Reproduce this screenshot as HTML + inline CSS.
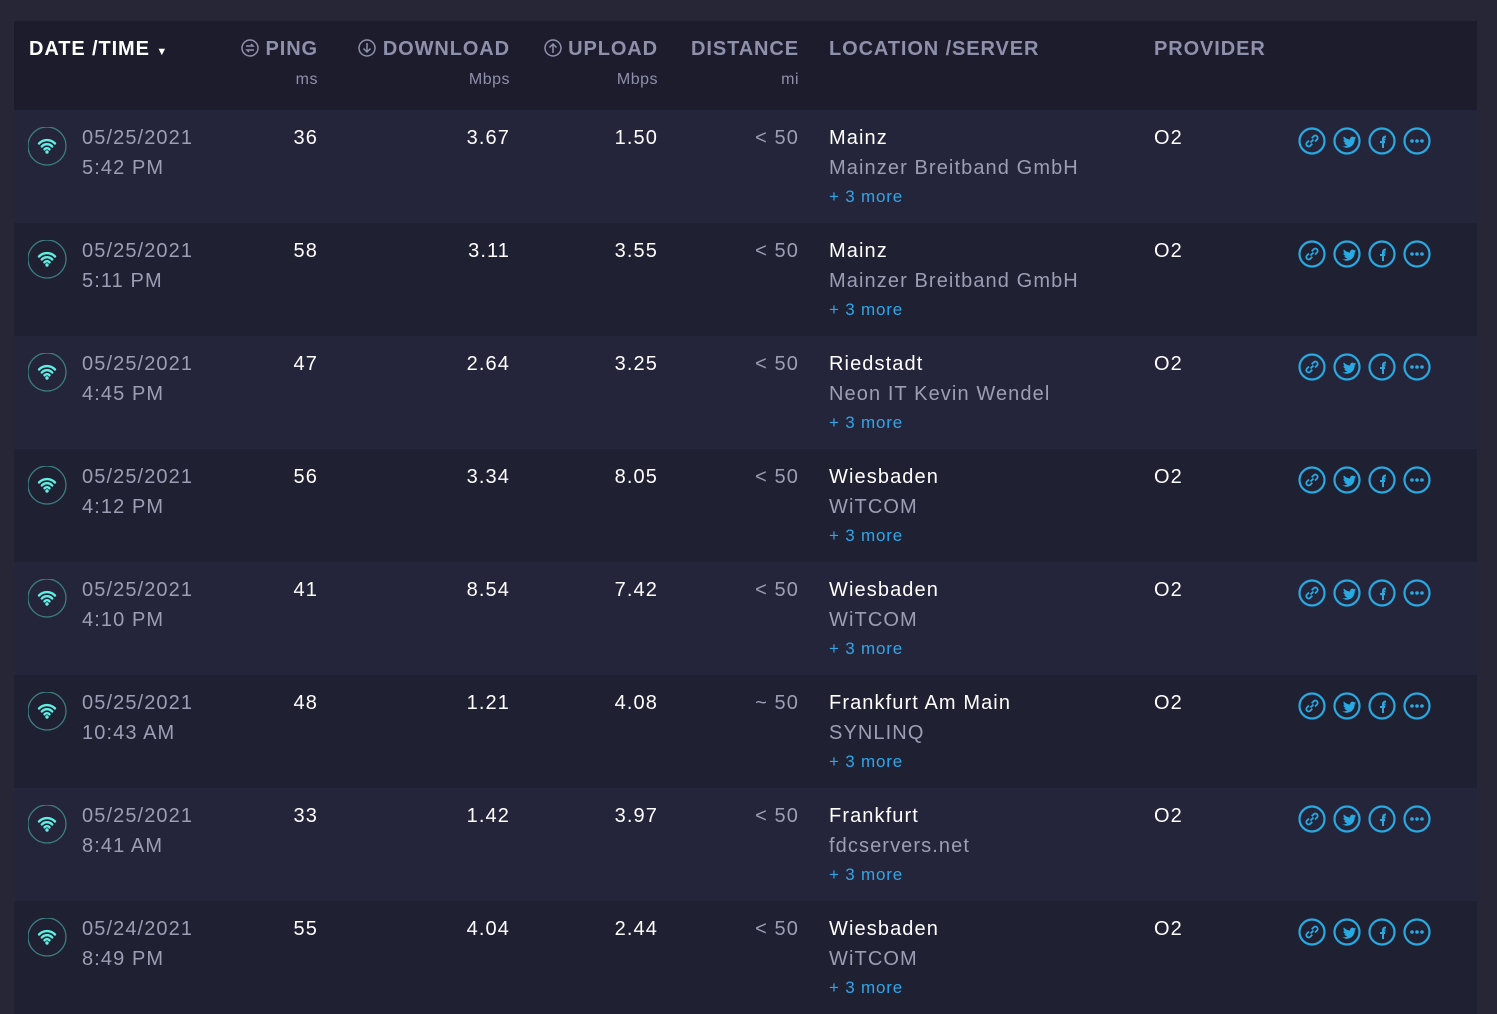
<!DOCTYPE html>
<html><head><meta charset="utf-8"><style>
*{margin:0;padding:0;box-sizing:border-box}
body{width:1497px;height:1011px;background:#262637;font-family:"Liberation Sans",sans-serif;position:relative;overflow:hidden}
.hdr{position:absolute;left:14px;top:21px;width:1463px;height:89px;background:#1c1c2d}
.h{position:absolute;top:17px;font-weight:bold;font-size:20px;color:#8f90ab;letter-spacing:.9px;white-space:nowrap}
.u{position:absolute;top:50px;font-size:16px;color:#8f90ab;white-space:nowrap;letter-spacing:.5px}
.row{position:absolute;left:14px;width:1463px;height:113px}
.a{background:#24253a}.b{background:#1f2031}
.t{position:absolute;font-size:20px;white-space:nowrap;letter-spacing:1.1px}
.w{color:#fff}.g{color:#9d9db4}
.r{text-align:right}
.more{position:absolute;left:815px;top:77px;font-size:17px;color:#2ea6ea;letter-spacing:.8px}
.wifi{position:absolute;left:14px;top:17px}
.ic{position:absolute;top:17px;left:1284px}
</style></head><body>
<div class="hdr">
<div class="h" style="left:15px;color:#fff">DATE /TIME <span style="font-size:11px">▼</span></div>
<div class="h" style="right:1159px"><svg width="18" height="18" viewBox="0 0 18 18" style="vertical-align:-2px"><circle cx="9" cy="9" r="8" fill="none" stroke="#8f90ab" stroke-width="1.5"/><path d="M5 7h7l-2-2M13 11H6l2 2" fill="none" stroke="#8f90ab" stroke-width="1.5"/></svg> PING</div>
<div class="u" style="right:1159px">ms</div>
<div class="h" style="right:967px"><svg width="18" height="18" viewBox="0 0 18 18" style="vertical-align:-2px"><circle cx="9" cy="9" r="8" fill="none" stroke="#8f90ab" stroke-width="1.5"/><path d="M9 4v9M5.5 9.5L9 13l3.5-3.5" fill="none" stroke="#8f90ab" stroke-width="1.5"/></svg> DOWNLOAD</div>
<div class="u" style="right:967px">Mbps</div>
<div class="h" style="right:819px"><svg width="18" height="18" viewBox="0 0 18 18" style="vertical-align:-2px"><circle cx="9" cy="9" r="8" fill="none" stroke="#8f90ab" stroke-width="1.5"/><path d="M9 14V5M5.5 8.5L9 5l3.5 3.5" fill="none" stroke="#8f90ab" stroke-width="1.5"/></svg> UPLOAD</div>
<div class="u" style="right:819px">Mbps</div>
<div class="h" style="right:678px">DISTANCE</div>
<div class="u" style="right:678px">mi</div>
<div class="h" style="left:815px">LOCATION /SERVER</div>
<div class="h" style="left:1140px">PROVIDER</div>
</div>

<svg width="0" height="0" style="position:absolute"><defs>
<g id="wf"><circle cx="19" cy="19" r="19" fill="none" stroke="#3c7d80" stroke-width="1.3"/><path d="M11 16.5a11 11 0 0 1 16 0M13.8 19.5a7 7 0 0 1 10.4 0M16.5 22.3a3.3 3.3 0 0 1 5 0" fill="none" stroke="#5ff0e3" stroke-width="2.4" stroke-linecap="round"/><circle cx="19" cy="25" r="1.7" fill="#5ff0e3"/></g>
<g id="icons" fill="none" stroke="#29a9e1" stroke-width="2.2">
<circle cx="14" cy="14" r="12.5"/><path d="M12.5 15.5l3-3M11 13.5l-2 2a2.3 2.3 0 0 0 3.3 3.3l2-2M17 14.5l2-2a2.3 2.3 0 0 0-3.3-3.3l-2 2" stroke-width="1.8"/>
<circle cx="49" cy="14" r="12.5"/><path d="M42 18.5c2 1.2 5 1.3 7.3-.4-2-.2-2.8-1.2-3-2 .6.1 1 0 1.5-.1-1.600-.5-2.400-1.500-2.400-3 .4.2 1 .4 1.500.4-1.400-1-1.800-2.700-1-4 1.700 2 3.800 3 6.200 3.100-.4-2.400 2.400-3.800 4-2.200.6-.1 1.200-.4 1.700-.7-.2.7-.6 1.200-1.200 1.600.5 0 1-.2 1.500-.4-.4.6-.9 1-1.400 1.400.2 4.500-3.400 9-9 8.500" fill="#29a9e1" stroke="none"/>
<circle cx="84" cy="14" r="12.5"/><path d="M85 21v-8.5h2.5M82 15h5M85 12.5c0-2 .8-3 3-3" stroke-width="2"/>
<circle cx="119" cy="14" r="12.5"/><circle cx="114" cy="14" r="1.8" fill="#29a9e1" stroke="none"/><circle cx="119" cy="14" r="1.8" fill="#29a9e1" stroke="none"/><circle cx="124" cy="14" r="1.8" fill="#29a9e1" stroke="none"/>
</g></defs></svg>

<div class="row a" style="top:110px">
<svg class="wifi" width="40" height="40"><use href="#wf"/></svg>
<div class="t g" style="left:68px;top:17px">05/25/2021</div><div class="t g" style="left:68px;top:47px">5:42 PM</div>
<div class="t w r" style="right:1159px;top:17px">36</div><div class="t w r" style="right:967px;top:17px">3.67</div><div class="t w r" style="right:819px;top:17px">1.50</div><div class="t g r" style="right:678px;top:17px">&lt; 50</div>
<div class="t w" style="left:815px;top:17px">Mainz</div><div class="t g" style="left:815px;top:47px">Mainzer Breitband GmbH</div><div class="more">+ 3 more</div>
<div class="t w" style="left:1140px;top:17px">O2</div>
<svg class="ic" width="140" height="30"><use href="#icons"/></svg></div>

<div class="row b" style="top:223px">
<svg class="wifi" width="40" height="40"><use href="#wf"/></svg>
<div class="t g" style="left:68px;top:17px">05/25/2021</div><div class="t g" style="left:68px;top:47px">5:11 PM</div>
<div class="t w r" style="right:1159px;top:17px">58</div><div class="t w r" style="right:967px;top:17px">3.11</div><div class="t w r" style="right:819px;top:17px">3.55</div><div class="t g r" style="right:678px;top:17px">&lt; 50</div>
<div class="t w" style="left:815px;top:17px">Mainz</div><div class="t g" style="left:815px;top:47px">Mainzer Breitband GmbH</div><div class="more">+ 3 more</div>
<div class="t w" style="left:1140px;top:17px">O2</div>
<svg class="ic" width="140" height="30"><use href="#icons"/></svg></div>

<div class="row a" style="top:336px">
<svg class="wifi" width="40" height="40"><use href="#wf"/></svg>
<div class="t g" style="left:68px;top:17px">05/25/2021</div><div class="t g" style="left:68px;top:47px">4:45 PM</div>
<div class="t w r" style="right:1159px;top:17px">47</div><div class="t w r" style="right:967px;top:17px">2.64</div><div class="t w r" style="right:819px;top:17px">3.25</div><div class="t g r" style="right:678px;top:17px">&lt; 50</div>
<div class="t w" style="left:815px;top:17px">Riedstadt</div><div class="t g" style="left:815px;top:47px">Neon IT Kevin Wendel</div><div class="more">+ 3 more</div>
<div class="t w" style="left:1140px;top:17px">O2</div>
<svg class="ic" width="140" height="30"><use href="#icons"/></svg></div>

<div class="row b" style="top:449px">
<svg class="wifi" width="40" height="40"><use href="#wf"/></svg>
<div class="t g" style="left:68px;top:17px">05/25/2021</div><div class="t g" style="left:68px;top:47px">4:12 PM</div>
<div class="t w r" style="right:1159px;top:17px">56</div><div class="t w r" style="right:967px;top:17px">3.34</div><div class="t w r" style="right:819px;top:17px">8.05</div><div class="t g r" style="right:678px;top:17px">&lt; 50</div>
<div class="t w" style="left:815px;top:17px">Wiesbaden</div><div class="t g" style="left:815px;top:47px">WiTCOM</div><div class="more">+ 3 more</div>
<div class="t w" style="left:1140px;top:17px">O2</div>
<svg class="ic" width="140" height="30"><use href="#icons"/></svg></div>

<div class="row a" style="top:562px">
<svg class="wifi" width="40" height="40"><use href="#wf"/></svg>
<div class="t g" style="left:68px;top:17px">05/25/2021</div><div class="t g" style="left:68px;top:47px">4:10 PM</div>
<div class="t w r" style="right:1159px;top:17px">41</div><div class="t w r" style="right:967px;top:17px">8.54</div><div class="t w r" style="right:819px;top:17px">7.42</div><div class="t g r" style="right:678px;top:17px">&lt; 50</div>
<div class="t w" style="left:815px;top:17px">Wiesbaden</div><div class="t g" style="left:815px;top:47px">WiTCOM</div><div class="more">+ 3 more</div>
<div class="t w" style="left:1140px;top:17px">O2</div>
<svg class="ic" width="140" height="30"><use href="#icons"/></svg></div>

<div class="row b" style="top:675px">
<svg class="wifi" width="40" height="40"><use href="#wf"/></svg>
<div class="t g" style="left:68px;top:17px">05/25/2021</div><div class="t g" style="left:68px;top:47px">10:43 AM</div>
<div class="t w r" style="right:1159px;top:17px">48</div><div class="t w r" style="right:967px;top:17px">1.21</div><div class="t w r" style="right:819px;top:17px">4.08</div><div class="t g r" style="right:678px;top:17px">~ 50</div>
<div class="t w" style="left:815px;top:17px">Frankfurt Am Main</div><div class="t g" style="left:815px;top:47px">SYNLINQ</div><div class="more">+ 3 more</div>
<div class="t w" style="left:1140px;top:17px">O2</div>
<svg class="ic" width="140" height="30"><use href="#icons"/></svg></div>

<div class="row a" style="top:788px">
<svg class="wifi" width="40" height="40"><use href="#wf"/></svg>
<div class="t g" style="left:68px;top:17px">05/25/2021</div><div class="t g" style="left:68px;top:47px">8:41 AM</div>
<div class="t w r" style="right:1159px;top:17px">33</div><div class="t w r" style="right:967px;top:17px">1.42</div><div class="t w r" style="right:819px;top:17px">3.97</div><div class="t g r" style="right:678px;top:17px">&lt; 50</div>
<div class="t w" style="left:815px;top:17px">Frankfurt</div><div class="t g" style="left:815px;top:47px">fdcservers.net</div><div class="more">+ 3 more</div>
<div class="t w" style="left:1140px;top:17px">O2</div>
<svg class="ic" width="140" height="30"><use href="#icons"/></svg></div>

<div class="row b" style="top:901px">
<svg class="wifi" width="40" height="40"><use href="#wf"/></svg>
<div class="t g" style="left:68px;top:17px">05/24/2021</div><div class="t g" style="left:68px;top:47px">8:49 PM</div>
<div class="t w r" style="right:1159px;top:17px">55</div><div class="t w r" style="right:967px;top:17px">4.04</div><div class="t w r" style="right:819px;top:17px">2.44</div><div class="t g r" style="right:678px;top:17px">&lt; 50</div>
<div class="t w" style="left:815px;top:17px">Wiesbaden</div><div class="t g" style="left:815px;top:47px">WiTCOM</div><div class="more">+ 3 more</div>
<div class="t w" style="left:1140px;top:17px">O2</div>
<svg class="ic" width="140" height="30"><use href="#icons"/></svg></div>
</body></html>
